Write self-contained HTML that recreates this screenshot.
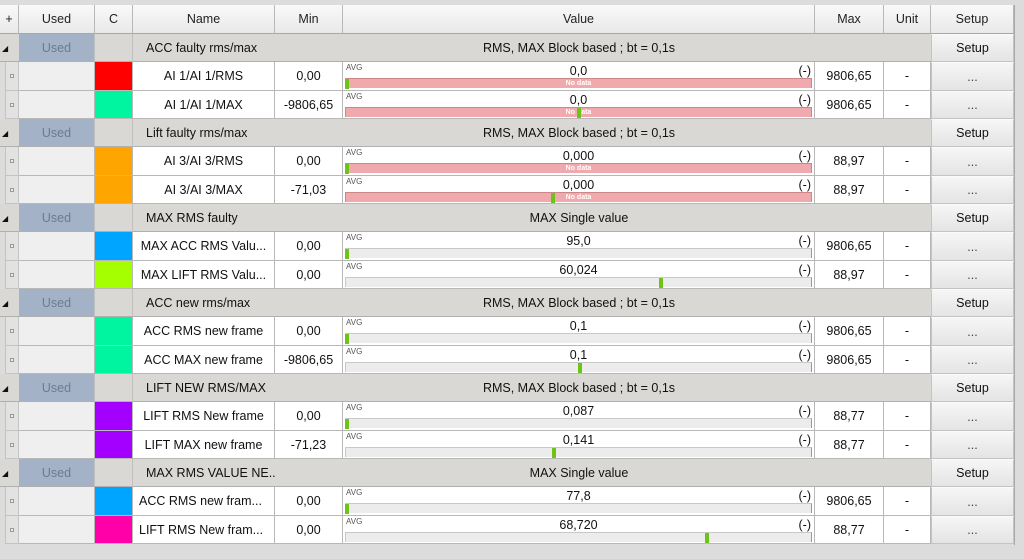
<!DOCTYPE html>
<html><head><meta charset="utf-8"><style>
*{box-sizing:border-box;margin:0;padding:0}
body{width:1024px;height:559px;background:#dddcdc;font-family:"Liberation Sans",sans-serif;font-size:12.5px;color:#111;position:relative;overflow:hidden}
.c{position:absolute;display:flex;align-items:center;justify-content:center;white-space:nowrap;overflow:hidden}
.hd{background:linear-gradient(#f9f9f9,#e9e9e9);border-right:1px solid #b8b8b8;border-bottom:1px solid #a8a8a8;color:#222}
.btn{background:linear-gradient(#f6f6f6,#e4e4e4);border:1px solid #c4c4c4;border-top-color:#fafafa}
.avg{position:absolute;left:3px;top:1px;font-size:8px;color:#555}
.val{position:absolute;left:0;right:0;top:2px;text-align:center;font-size:12.5px}
.unit{position:absolute;right:3px;top:2px;font-size:12.5px}
.bar{position:absolute;left:2px;right:2px;top:16px;height:10px;background:#ececec;border:1px solid #c8c8c8;border-right-color:#999;border-bottom:none}
.bar.nd{background:#f0a9ad;border-color:#c88}
.bar.nd span{position:absolute;left:0;right:0;top:0;text-align:center;font-size:7px;color:#fff;line-height:10px;font-weight:bold}
.mk{position:absolute;top:0;width:4px;height:10px;background:#6cc417}
</style></head><body>
<div class="c hd" style="left:0;top:5px;width:19px;height:29px">+</div>
<div class="c hd" style="left:19px;top:5px;width:76px;height:29px">Used</div>
<div class="c hd" style="left:95px;top:5px;width:38px;height:29px">C</div>
<div class="c hd" style="left:133px;top:5px;width:142px;height:29px">Name</div>
<div class="c hd" style="left:275px;top:5px;width:68px;height:29px">Min</div>
<div class="c hd" style="left:343px;top:5px;width:472px;height:29px">Value</div>
<div class="c hd" style="left:815px;top:5px;width:69px;height:29px">Max</div>
<div class="c hd" style="left:884px;top:5px;width:47px;height:29px">Unit</div>
<div class="c hd" style="left:931px;top:5px;width:83px;height:29px">Setup</div>
<div style="position:absolute;left:1014px;top:5px;width:1px;height:540px;background:#a8a8a8"></div>
<div id="rows"></div>
<script>
var G=[
["ACC faulty rms/max","RMS, MAX Block based ; bt = 0,1s",[
 ["#ff0000","AI 1/AI 1/RMS","0,00","0,0","9806,65",1,346],
 ["#00f5a0","AI 1/AI 1/MAX","-9806,65","0,0","9806,65",1,578]]],
["Lift faulty rms/max","RMS, MAX Block based ; bt = 0,1s",[
 ["#ffa500","AI 3/AI 3/RMS","0,00","0,000","88,97",1,346],
 ["#ffa500","AI 3/AI 3/MAX","-71,03","0,000","88,97",1,552]]],
["MAX RMS faulty","MAX Single value",[
 ["#00a5ff","MAX ACC RMS Valu...","0,00","95,0","9806,65",0,346],
 ["#a6ff00","MAX LIFT RMS Valu...","0,00","60,024","88,97",0,660]]],
["ACC new rms/max","RMS, MAX Block based ; bt = 0,1s",[
 ["#00f5a0","ACC RMS new frame","0,00","0,1","9806,65",0,346],
 ["#00f5a0","ACC MAX new frame","-9806,65","0,1","9806,65",0,579]]],
["LIFT NEW RMS/MAX","RMS, MAX Block based ; bt = 0,1s",[
 ["#a400ff","LIFT RMS New frame","0,00","0,087","88,77",0,346],
 ["#a400ff","LIFT MAX new frame","-71,23","0,141","88,77",0,553]]],
["MAX RMS VALUE NE...","MAX Single value",[
 ["#00a5ff","ACC RMS new fram...","0,00","77,8","9806,65",0,346],
 ["#ff00a8","LIFT RMS New fram...","0,00","68,720","88,77",0,706]]]];
var h="",i=0,R=85/3;
function c(l,t,w,hh,st,tx){return '<div class="c" style="left:'+l+'px;top:'+t+'px;width:'+w+'px;height:'+hh+'px;'+st+'">'+(tx||"")+'</div>';}
G.forEach(function(g,gi){
 var t=Math.round(34+i*R),hh=Math.round(34+(i+1)*R)-t;i++;
 h+=c(0,t,1014,hh,"background:#d9d8d4;border-bottom:1px solid #b0b0b0");
 h+=c(0,t,19,hh,"justify-content:flex-start;padding-left:2px;font-size:8px","&#9698;");
 h+=c(19,t,76,hh,"background:#a3b2c6;color:#6d7b90;border-right:1px solid #c0c0c0;border-bottom:1px solid #b0b0b0","Used");
 h+=c(95,t,38,hh,"border-right:1px solid #c0c0c0");
 h+=c(133,t,142,hh,"justify-content:flex-start;padding-left:13px",g[0]);
 h+=c(343,t,472,hh,"",g[1]);
 h+=c(931,t,83,hh,"","<div class='c btn' style='left:0;top:0;width:83px;height:"+hh+"px'>Setup</div>");
 g[2].forEach(function(r){
  var t=Math.round(34+i*R),hh=Math.round(34+(i+1)*R)-t;i++;
  var bd="border-right:1px solid #b8b8b8;border-bottom:1px solid #b8b8b8;";
  h+=c(0,t,5,hh,"background:#dddcdc");
  h+=c(5,t,14,hh,"background:#e2e2e0;border:1px solid #c4c4c4;border-top:none","<div style='width:4px;height:4px;border:1px solid #999;background:#eee'></div>");
  h+=c(19,t,76,hh,"background:#efefef;"+bd);
  h+=c(95,t,38,hh,"background:"+r[0]+";"+bd);
  h+=c(133,t,142,hh,"background:#fff;"+bd+(r[1].indexOf("...")>0&&gi==5?"justify-content:flex-start;padding-left:6px":""),r[1]);
  h+=c(275,t,68,hh,"background:#fff;"+bd,r[2]);
  var bar=r[5]?'<div class="bar nd"><span>No data</span><div class="mk" style="left:'+(r[6]-347)+'px"></div></div>':'<div class="bar"><div class="mk" style="left:'+(r[6]-347)+'px"></div></div>';
  h+=c(343,t,472,hh,"background:#fff;display:block;"+bd,'<div class="avg">AVG</div><div class="val">'+r[3]+'</div><div class="unit">(-)</div>'+bar);
  h+=c(815,t,69,hh,"background:#fff;"+bd,r[4]);
  h+=c(884,t,47,hh,"background:#fff;"+bd,"-");
  h+=c(931,t,83,hh,"","<div class='c btn' style='left:0;top:0;width:83px;height:"+hh+"px;color:#444'>...</div>");
 });
});
document.getElementById("rows").innerHTML=h;
</script>
</body></html>
